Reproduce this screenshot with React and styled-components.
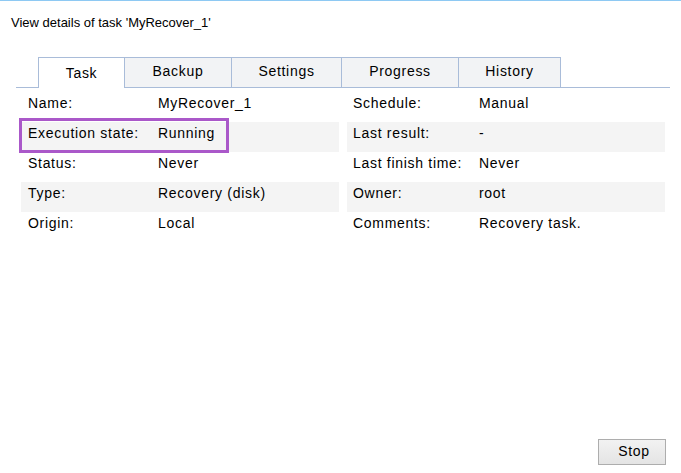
import styled, { createGlobalStyle } from "styled-components";

const GlobalStyle = createGlobalStyle`
    html, body {
        margin: 0;
        padding: 0;
        background: #ffffff;
    }
    body {
        font-family: "Liberation Sans", Arial, sans-serif;
        font-size: 13px;
        color: #000;
    }
`;

const tabs = ["Task", "Backup", "Settings", "Progress", "History"];
const tabWidths = [87, 107, 110, 117, 102];

const leftRows = [
    ["Name:", "MyRecover_1"],
    ["Execution state:", "Running"],
    ["Status:", "Never"],
    ["Type:", "Recovery (disk)"],
    ["Origin:", "Local"],
];

const rightRows = [
    ["Schedule:", "Manual"],
    ["Last result:", "-"],
    ["Last finish time:", "Never"],
    ["Owner:", "root"],
    ["Comments:", "Recovery task."],
];

const App = () => {
    return (
        <>
        <GlobalStyle />
        <Page>
            <Title>View details of task 'MyRecover_1'</Title>
            <TabBar>
                {tabs.map((tab, i) => (
                    <Tab key={tab} $active={i === 0} $width={tabWidths[i]}>{tab}</Tab>
                ))}
            </TabBar>
            <Columns>
                <Table>
                    {leftRows.map(([label, value], i) => (
                        <Row key={label} $shaded={i % 2 === 1}>
                            <Label>{label}</Label>
                            <Value>{value}</Value>
                            {i === 1 && <Highlight />}
                        </Row>
                    ))}
                </Table>
                <Table>
                    {rightRows.map(([label, value], i) => (
                        <Row key={label} $shaded={i % 2 === 1}>
                            <Label $right>{label}</Label>
                            <Value>{value}</Value>
                        </Row>
                    ))}
                </Table>
            </Columns>
            <Footer>
                <Button>Stop</Button>
            </Footer>
        </Page>
        </>
    )
}

const Page = styled.div`
    display: flex;
    flex-direction: column;
    width: 681px;
    height: 473px;
    box-sizing: border-box;
    border-top: 1px solid #8ec9f3;
`;

const Title = styled.div`
    padding: 14px 0 0 11px;
    line-height: 16px;
    height: 16px;
`;

const TabBar = styled.div`
    display: flex;
    margin: 26px 0 0 16px;
    width: 654px;
    padding-left: 22px;
    box-sizing: border-box;
    border-bottom: 1px solid #a9bcd9;
    height: 31px;
`;

const Tab = styled.div`
    width: ${(p) => p.$width}px;
    box-sizing: border-box;
    height: ${(p) => (p.$active ? "31px" : "30px")};
    border: 1px solid #a9bcd9;
    border-left-width: ${(p) => (p.$active ? "1px" : "0")};
    border-bottom: none;
    background: ${(p) => (p.$active ? "#ffffff" : "#f2f3f5")};
    display: flex;
    align-items: center;
    justify-content: center;
    padding-bottom: ${(p) => (p.$active ? "1px" : "3px")};
    font-size: 14px;
    letter-spacing: 0.7px;
    margin-bottom: ${(p) => (p.$active ? "-1px" : "0")};
    position: relative;
`;

const Columns = styled.div`
    display: grid;
    grid-template-columns: 318px 318px;
    column-gap: 8px;
    margin: 4px 0 0 21px;
`;

const Table = styled.div`
    display: flex;
    flex-direction: column;
`;

const Row = styled.div`
    position: relative;
    display: flex;
    align-items: center;
    height: 30px;
    box-sizing: border-box;
    padding-bottom: 9px;
    font-size: 14px;
    letter-spacing: 0.7px;
    background: ${(p) => (p.$shaded ? "#f4f4f4" : "transparent")};
`;

const Label = styled.div`
    width: ${(p) => (p.$right ? "126px" : "130px")};
    padding-left: ${(p) => (p.$right ? "6px" : "7px")};
    box-sizing: content-box;
`;

const Value = styled.div``;

const Highlight = styled.div`
    position: absolute;
    left: -2px;
    top: -4px;
    width: 210px;
    height: 35px;
    box-sizing: border-box;
    border: 3px solid #aa58c9;
    pointer-events: none;
`;

const Footer = styled.div`
    margin-top: auto;
    display: flex;
    justify-content: flex-end;
    padding: 0 15px 8px 0;
`;

const Button = styled.button`
    width: 68px;
    height: 26px;
    font-family: "Liberation Sans", Arial, sans-serif;
    font-size: 14px;
    letter-spacing: 0.7px;
    color: #000;
    background: linear-gradient(#f2f2f2, #e4e4e4);
    border: 1px solid #adadad;
    border-radius: 0;
    padding: 0 0 2px 4px;
`;

export default App;
